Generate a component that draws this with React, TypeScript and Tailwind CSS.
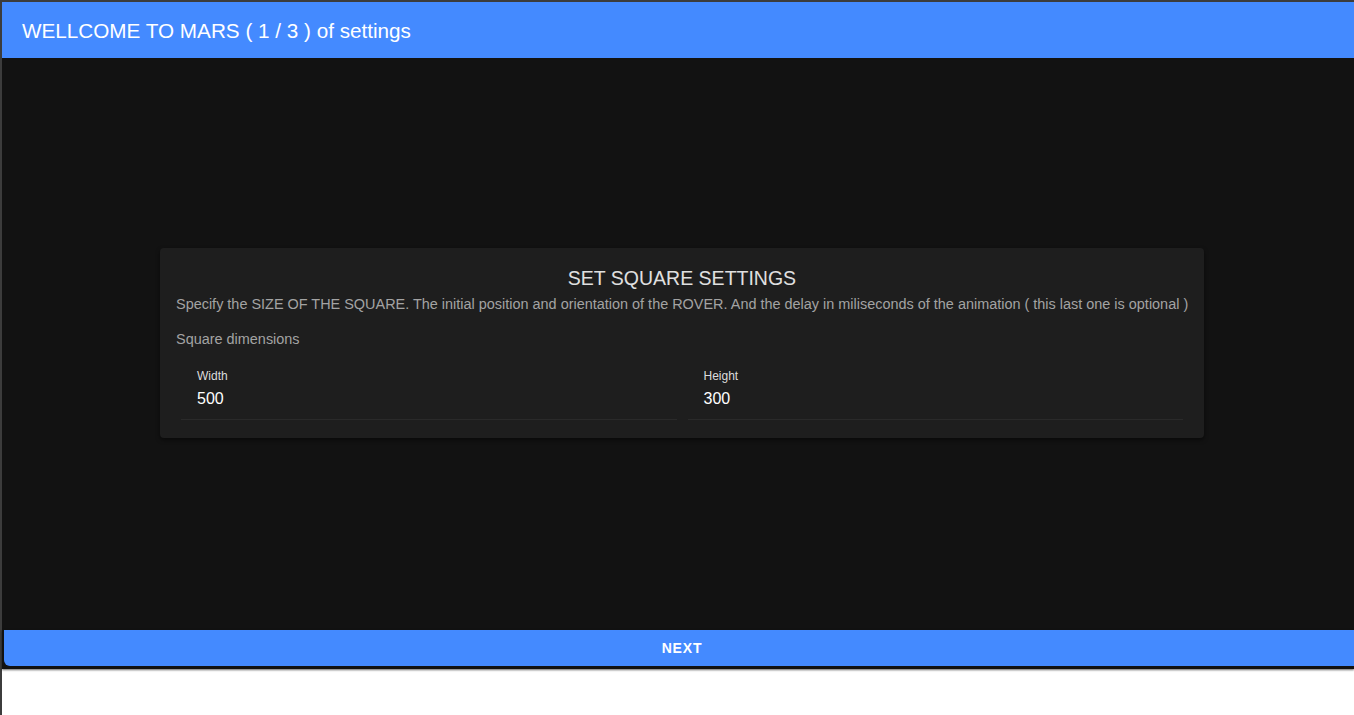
export default function App() {
  const fields = [
    { label: 'Width', value: '500' },
    { label: 'Height', value: '300' },
  ]

  return (
    <div
      className="h-[715px] flex flex-col bg-white border-l-2 border-[#3c3c3c]"
      style={{ fontFamily: '"Liberation Sans", Arial, sans-serif' }}
    >
      <div className="flex flex-col bg-[#121212] border-t-2 border-[#3c3c3c]">
        <header className="h-14 bg-[#448aff] flex items-center px-5 pt-[2px]">
          <h1 className="text-[20.7px] text-white">
            WELLCOME TO MARS ( 1 / 3 ) of settings
          </h1>
        </header>

        <main className="h-[572px] flex items-center justify-center pl-2 pb-[3px]">
          <div className="w-[1044px] bg-[#1e1e1e] rounded shadow-[0_2px_4px_rgba(0,0,0,0.5)] px-4 pt-4 pb-[18px]">
            <h2 className="text-center text-[19.5px] leading-7 text-[#e0e0e0]">
              SET SQUARE SETTINGS
            </h2>
            <p className="mt-0.5 text-[14.45px] leading-5 text-[#a3a3a3] whitespace-nowrap">
              Specify the SIZE OF THE SQUARE. The initial position and orientation of the ROVER. And the delay in miliseconds of the animation ( this last one is optional )
            </p>
            <p className="mt-[15px] text-[14.45px] leading-5 text-[#a3a3a3]">
              Square dimensions
            </p>
            <div className="grid grid-cols-2 gap-[11px] px-[5px]">
              {fields.map((field) => (
                <div
                  key={field.label}
                  className="px-4 pt-5 pb-2 border-b border-[#2a2a2a]"
                >
                  <div className="text-xs leading-[14px] text-[#dcdcdc]">
                    {field.label}
                  </div>
                  <div className="mt-1 text-base leading-6 text-white">
                    {field.value}
                  </div>
                </div>
              ))}
            </div>
          </div>
        </main>

        <div className="pl-[2px] pb-[3px] bg-[#121212] shadow-[0_1px_2px_rgba(0,0,0,0.6)]">
          <button className="w-full h-9 bg-[#448aff] rounded-bl-md pl-[6px] text-white text-sm font-bold tracking-[0.06em]">
            NEXT
          </button>
        </div>
      </div>
    </div>
  )
}
